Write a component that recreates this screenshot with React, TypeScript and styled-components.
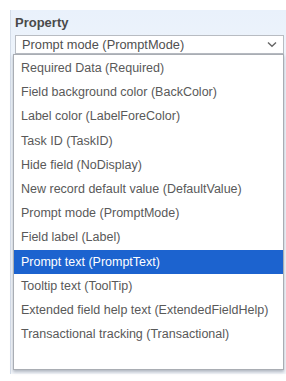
import React from "react";
import styled, { createGlobalStyle } from "styled-components";

const GlobalStyle = createGlobalStyle`
  html, body {
    margin: 0;
    padding: 0;
    background: #ffffff;
    font-family: "Liberation Sans", Arial, sans-serif;
  }
`;

const options = [
  "Required Data (Required)",
  "Field background color (BackColor)",
  "Label color (LabelForeColor)",
  "Task ID (TaskID)",
  "Hide field (NoDisplay)",
  "New record default value (DefaultValue)",
  "Prompt mode (PromptMode)",
  "Field label (Label)",
  "Prompt text (PromptText)",
  "Tooltip text (ToolTip)",
  "Extended field help text (ExtendedFieldHelp)",
  "Transactional tracking (Transactional)",
];

const selectedIndex = 8;

export default function App() {
  return (
    <>
      <GlobalStyle />
      <Page>
        <Panel>
          <Title>Property</Title>
          <SelectBox>
            <SelectText>Prompt mode (PromptMode)</SelectText>
            <svg width="10" height="7" viewBox="0 0 10 7">
              <path
                d="M1 1.5 L5 5.2 L9 1.5"
                fill="none"
                stroke="#666"
                strokeWidth="1.4"
              />
            </svg>
          </SelectBox>
          <DropList>
            {options.map((opt, i) => (
              <Option key={opt} $active={i === selectedIndex}>
                {opt}
              </Option>
            ))}
          </DropList>
        </Panel>
      </Page>
    </>
  );
}

const Page = styled.div`
  width: 286px;
  height: 381px;
  padding: 10px 0 0 10px;
  box-sizing: border-box;
  overflow: hidden;
`;

const Panel = styled.div`
  height: 364px;
  border-left: 1px solid #d3dce8;
  background: linear-gradient(#e9f1fb 0px, #eef4fb 50px, #f4f7fb 100%);
  padding: 5px 0 0 2px;
  box-sizing: border-box;
`;

const Title = styled.div`
  font-size: 13px;
  font-weight: bold;
  color: #4a4a4a;
  padding-left: 2px;
  height: 20px;
  line-height: 16px;
`;

const SelectBox = styled.div`
  margin-left: 2px;
  width: 269px;
  height: 19px;
  box-sizing: border-box;
  border: 1px solid #b8bcc2;
  background: #ffffff;
  display: flex;
  align-items: center;
  justify-content: space-between;
  padding: 0 6px 0 6px;
`;

const SelectText = styled.span`
  font-size: 12.8px;
  color: #505050;
`;

const DropList = styled.div`
  width: 271px;
  height: 316px;
  box-sizing: border-box;
  background: #ffffff;
  border: 1px solid #a9adb3;
  box-shadow: 0 2px 3px rgba(120, 130, 145, 0.55);
  padding-top: 1px;
`;

const Option = styled.div<{ $active?: boolean }>`
  height: 24.2px;
  display: flex;
  align-items: center;
  padding-left: 7px;
  font-size: 12.5px;
  white-space: nowrap;
  color: ${(p) => (p.$active ? "#ffffff" : "#595959")};
  background: ${(p) => (p.$active ? "#1c63cf" : "transparent")};
`;
